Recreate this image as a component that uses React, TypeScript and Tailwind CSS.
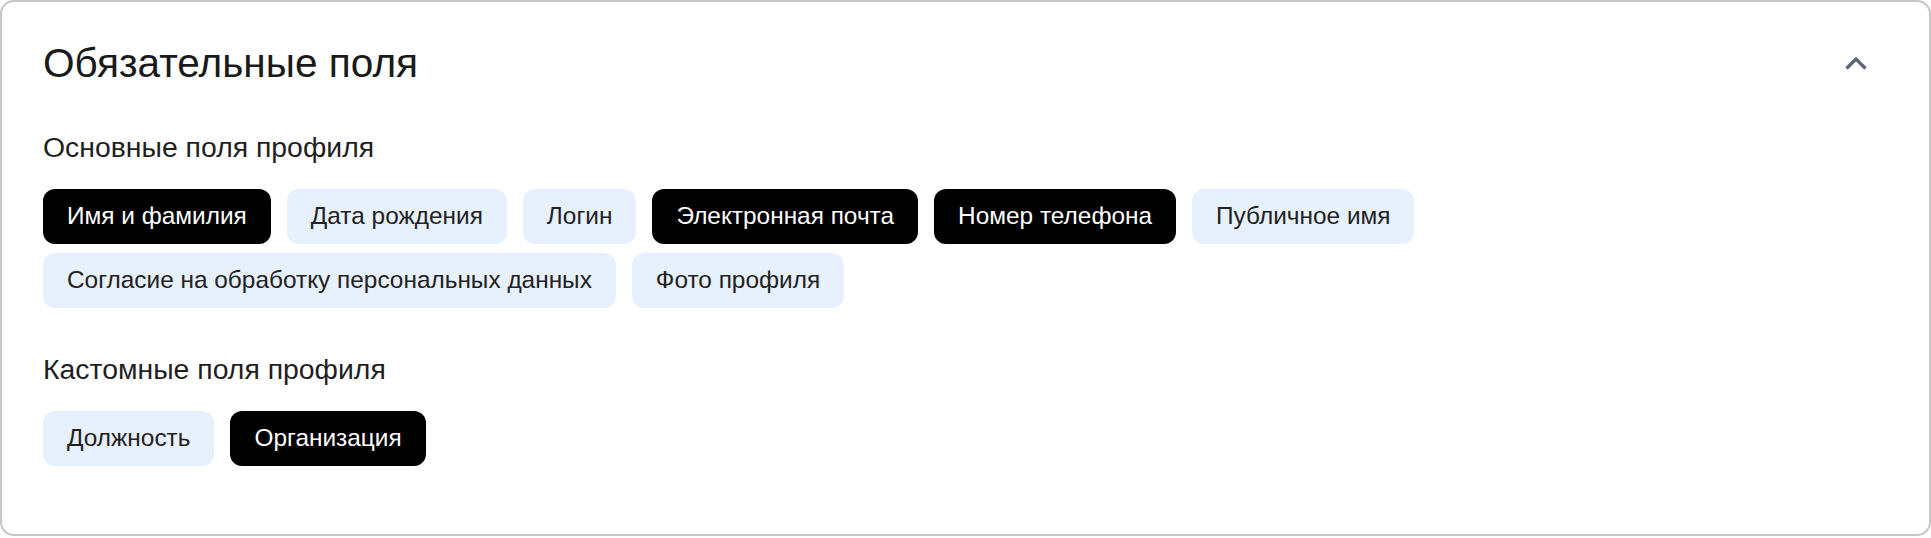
import React from "react";

interface Field {
  label: string;
  required: boolean;
}

const baseFields: Field[] = [
  { label: "Имя и фамилия", required: true },
  { label: "Дата рождения", required: false },
  { label: "Логин", required: false },
  { label: "Электронная почта", required: true },
  { label: "Номер телефона", required: true },
  { label: "Публичное имя", required: false },
  { label: "Согласие на обработку персональных данных", required: false },
  { label: "Фото профиля", required: false },
];

const customFields: Field[] = [
  { label: "Должность", required: false },
  { label: "Организация", required: true },
];

const Chip: React.FC<{ field: Field }> = ({ field }) => (
  <span
    className={`h-[55px] px-6 flex items-center rounded-xl text-[24.4px] leading-none whitespace-nowrap ${
      field.required ? "bg-black text-white" : "bg-[#e7f0fd] text-[#222222]"
    }`}
  >
    {field.label}
  </span>
);

const FieldGroup: React.FC<{ title: string; fields: Field[] }> = ({
  title,
  fields,
}) => (
  <div className="flex flex-col">
    <h3 className="text-[28.4px] leading-[32px] text-[#1f1f1f]">{title}</h3>
    <div className="mt-[26px] flex flex-wrap gap-x-4 gap-y-[9px]">
      {fields.map((f) => (
        <Chip key={f.label} field={f} />
      ))}
    </div>
  </div>
);

const App: React.FC = () => {
  return (
    <div
      className="w-full bg-white"
      style={{ fontFamily: '"Liberation Sans", Arial, sans-serif' }}
    >
      <div className="border-2 border-[#c6c6c6] rounded-[14px] pl-[41px] pr-[60px] pt-[37px] pb-[68px]">
        <div className="flex items-center justify-between">
          <h2 className="text-[40.6px] leading-[48px] text-[#1a1a1a]">
            Обязательные поля
          </h2>
          <button className="w-[26px] h-[16px] flex items-center justify-center">
            <svg width="26" height="16" viewBox="0 0 26 16" fill="none">
              <path
                d="M3.5 13.5 L13 4 L22.5 13.5"
                stroke="#5d6572"
                strokeWidth="3.2"
                strokeLinejoin="miter"
              />
            </svg>
          </button>
        </div>
        <div className="mt-[44px] flex flex-col gap-[45px]">
          <FieldGroup title="Основные поля профиля" fields={baseFields} />
          <FieldGroup title="Кастомные поля профиля" fields={customFields} />
        </div>
      </div>
    </div>
  );
};

export default App;
